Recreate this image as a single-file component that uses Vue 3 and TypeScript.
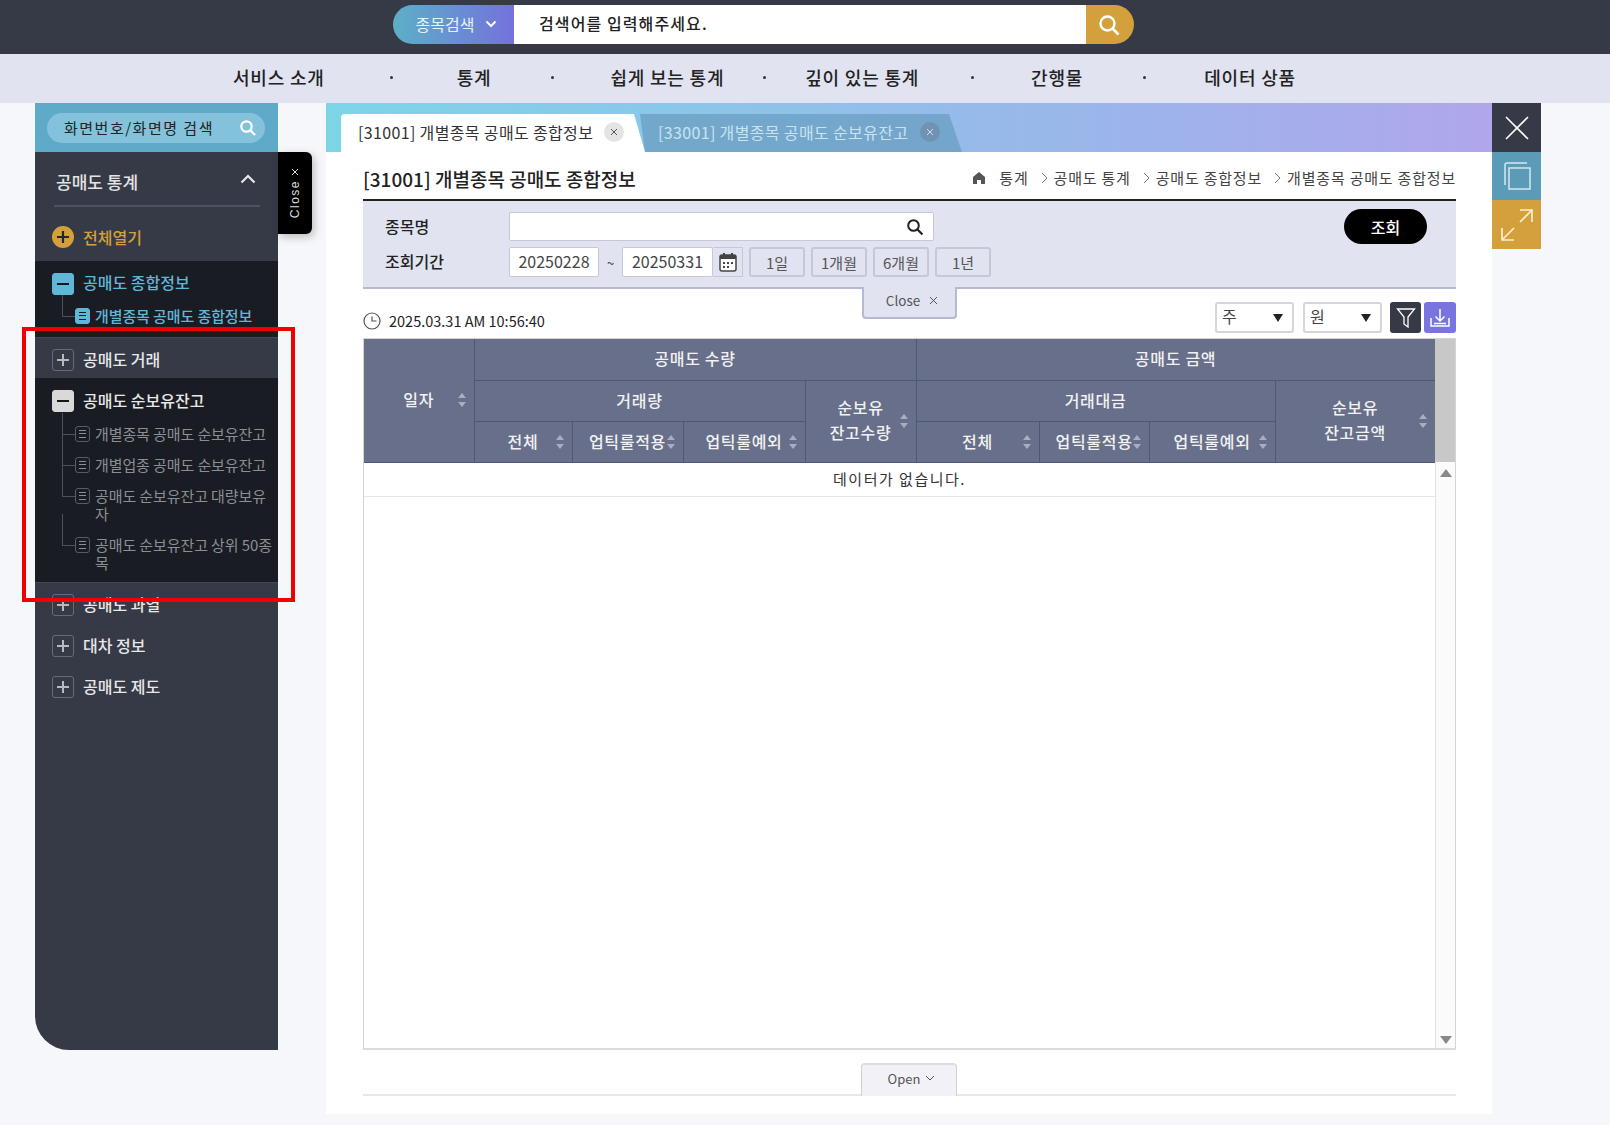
<script setup lang="ts">
const navItems = ['서비스 소개', '통계', '쉽게 보는 통계', '깊이 있는 통계', '간행물', '데이터 상품']

interface TreeGroup {
  title: string
  open?: 'blue' | 'white'
  subs?: string[]
}

const groups: TreeGroup[] = [
  { title: '공매도 종합정보', open: 'blue', subs: ['개별종목 공매도 종합정보'] },
  { title: '공매도 거래' },
  {
    title: '공매도 순보유잔고',
    open: 'white',
    subs: [
      '개별종목 공매도 순보유잔고',
      '개별업종 공매도 순보유잔고',
      '공매도 순보유잔고 대량보유자',
      '공매도 순보유잔고 상위 50종목',
    ],
  },
  { title: '공매도 과열' },
  { title: '대차 정보' },
  { title: '공매도 제도' },
]

const crumbs = ['통계', '공매도 통계', '공매도 종합정보', '개별종목 공매도 종합정보']
const periods = ['1일', '1개월', '6개월', '1년']
const colWidths = [110, 98, 111, 122, 111, 123, 110, 126, 160]
</script>

<template>
  <div class="page">
    <header class="top">
      <div class="search-box">
        <div class="search-kind">
          종목검색
          <svg width="12" height="8" viewBox="0 0 12 8"><path d="M1.5 1.5 6 6l4.5-4.5" fill="none" stroke="#fff" stroke-width="2" /></svg>
        </div>
        <div class="search-input">검색어를 입력해주세요.</div>
        <div class="search-btn">
          <svg width="24" height="24" viewBox="0 0 24 24"><circle cx="10.5" cy="10.5" r="7" fill="none" stroke="#fff" stroke-width="2.4" /><path d="m15.5 15.5 6 6" stroke="#fff" stroke-width="2.6" /></svg>
        </div>
      </div>
    </header>

    <nav class="nav">
      <template v-for="(item, i) in navItems" :key="item">
        <span class="nav-item">{{ item }}</span>
        <span v-if="i < navItems.length - 1" class="nav-dot"></span>
      </template>
    </nav>

    <div class="body">
      <aside class="side">
        <div class="side-search">
          <div class="side-pill">
            <span>화면번호/화면명 검색</span>
            <svg width="18" height="18" viewBox="0 0 18 18"><circle cx="7.5" cy="7.5" r="5.2" fill="none" stroke="#fff" stroke-width="2.2" /><path d="m11.5 11.5 4.5 4.5" stroke="#fff" stroke-width="2.4" /></svg>
          </div>
        </div>
        <div class="side-head">
          <div class="side-head-in">
            <span>공매도 통계</span>
            <svg width="16" height="10" viewBox="0 0 16 10"><path d="M1.5 8.5 8 2l6.500 6.500" fill="none" stroke="#e8e8e8" stroke-width="2.2" /></svg>
          </div>
        </div>
        <div class="open-all">
          <svg width="22" height="22" viewBox="0 0 22 22"><circle cx="11" cy="11" r="11" fill="#d3a03c" /><path d="M11 5v12M5 11h12" stroke="#23262e" stroke-width="2.2" /></svg>
          <span>전체열기</span>
        </div>

        <div
          v-for="g in groups"
          :key="g.title"
          class="group"
          :class="{ open: g.open, blue: g.open === 'blue' }"
        >
          <div class="group-row">
            <span class="box" :class="g.open">
              <i></i><b v-if="!g.open"></b>
            </span>
            <span class="group-title">{{ g.title }}</span>
          </div>
          <ul v-if="g.subs" class="subs">
            <li v-for="s in g.subs" :key="s" class="sub">
              <span class="sub-icon"><i></i></span>
              <span class="sub-text">{{ s }}</span>
            </li>
          </ul>
        </div>

        <div class="side-close">
          <span>Close</span>
          <svg width="8" height="8" viewBox="0 0 8 8"><path d="m1 1 6 6M7 1 1 7" stroke="#ddd" stroke-width="1" /></svg>
        </div>
        <div class="red-mark"></div>
      </aside>

      <main class="main">
        <div class="tabs">
          <div class="tab active">
            <span>[31001] 개별종목 공매도 종합정보</span>
            <span class="tab-x">
              <svg width="8" height="8" viewBox="0 0 8 8"><path d="m1 1 6 6M7 1 1 7" stroke="#555" stroke-width="1" /></svg>
            </span>
          </div>
          <div class="tab second">
            <span>[33001] 개별종목 공매도 순보유잔고</span>
            <span class="tab-x">
              <svg width="8" height="8" viewBox="0 0 8 8"><path d="m1 1 6 6M7 1 1 7" stroke="#dde" stroke-width="1" /></svg>
            </span>
          </div>
        </div>

        <div class="content">
          <div class="title-row">
            <h1>[31001] 개별종목 공매도 종합정보</h1>
            <div class="crumbs">
              <svg width="14" height="14" viewBox="0 0 14 14"><path d="M7 1 1 6v7h4V9h4v4h4V6z" fill="#555" /></svg>
              <template v-for="(c, i) in crumbs" :key="c">
                <svg v-if="i > 0" class="crumb-arrow" width="7" height="12" viewBox="0 0 7 12"><path d="m1 1 5 5-5 5" fill="none" stroke="#777" /></svg>
                <span>{{ c }}</span>
              </template>
            </div>
          </div>

          <div class="filter">
            <div class="filter-left">
              <div class="filter-row first">
                <label>종목명</label>
                <div class="stock-input">
                  <svg width="18" height="18" viewBox="0 0 18 18"><circle cx="7.500" cy="7.500" r="5.300" fill="none" stroke="#222" stroke-width="2" /><path d="m11.500 11.500 5 5" stroke="#222" stroke-width="2.200" /></svg>
                </div>
              </div>
              <div class="filter-row">
                <label>조회기간</label>
                <div class="date">20250228</div>
                <span class="tilde">~</span>
                <div class="date joined">20250331</div>
                <div class="cal">
                  <svg width="18" height="20" viewBox="0 0 18 20">
                    <rect x="1" y="3" width="16" height="16" rx="2" fill="#fff" stroke="#444" stroke-width="1.500" />
                    <path d="M1 3h16v4H1z" fill="#444" />
                    <path d="M5 1v4M13 1v4" stroke="#444" stroke-width="2" />
                    <path d="M4 10h2v2H4zM8 10h2v2H8zM12 10h2v2h-2zM4 14h2v2H4zM8 14h2v2H8z" fill="#444" />
                  </svg>
                </div>
                <button v-for="p in periods" :key="p" class="period">{{ p }}</button>
              </div>
            </div>
            <button class="query">조회</button>
          </div>

          <div class="tools">
            <div class="time">
              <svg width="18" height="18" viewBox="0 0 18 18"><circle cx="9" cy="9" r="8" fill="none" stroke="#555" stroke-width="1.200" /><path d="M9 4.500V9h4.500" fill="none" stroke="#555" stroke-width="1.200" /></svg>
              <span>2025.03.31 AM 10:56:40</span>
            </div>
            <div class="tool-right">
              <div class="select">주<i></i></div>
              <div class="select">원<i></i></div>
              <div class="tool-btn dark">
                <svg width="20" height="22" viewBox="0 0 20 22"><path d="M1.500 2h17l-6.500 8v10l-4-3v-7z" fill="none" stroke="#fff" stroke-width="1.300" /></svg>
              </div>
              <div class="tool-btn violet">
                <svg width="22" height="22" viewBox="0 0 22 22"><path d="M11 2v12M6.500 9.500 11 14l4.500-4.500" fill="none" stroke="#fff" stroke-width="1.500" /><path d="M2 11v8h18v-8" fill="none" stroke="#fff" stroke-width="1.500" /><path d="M5 16.500h12" stroke="#fff" stroke-width="1.500" /></svg>
              </div>
            </div>
            <div class="fold-close"><span>Close</span><svg width="9" height="9" viewBox="0 0 9 9"><path d="m1 1 7 7M8 1 1 8" stroke="#555" stroke-width="1" /></svg></div>
          </div>

          <div class="grid">
            <div class="grid-main">
              <table>
                <colgroup>
                  <col v-for="(w, i) in colWidths" :key="i" :width="w" />
                </colgroup>
                <thead>
                  <tr>
                    <th rowspan="3">일자<span class="sort"></span></th>
                    <th colspan="4">공매도 수량</th>
                    <th colspan="4">공매도 금액</th>
                  </tr>
                  <tr>
                    <th colspan="3">거래량</th>
                    <th rowspan="2" class="two">순보유<br />잔고수량<span class="sort"></span></th>
                    <th colspan="3">거래대금</th>
                    <th rowspan="2" class="two">순보유<br />잔고금액<span class="sort"></span></th>
                  </tr>
                  <tr>
                    <th>전체<span class="sort"></span></th>
                    <th>업틱룰적용<span class="sort"></span></th>
                    <th>업틱룰예외<span class="sort"></span></th>
                    <th>전체<span class="sort"></span></th>
                    <th>업틱룰적용<span class="sort"></span></th>
                    <th>업틱룰예외<span class="sort"></span></th>
                  </tr>
                </thead>
              </table>
              <div class="empty">데이터가 없습니다.</div>
            </div>
            <div class="scroll">
              <div class="scroll-thumb"></div>
              <div class="scroll-up"></div>
              <div class="scroll-down"></div>
            </div>
          </div>

          <div class="fold-line">
            <div class="fold-open">
              <span>Open</span>
              <svg width="10" height="6" viewBox="0 0 10 6"><path d="m1 1 4 4 4-4" fill="none" stroke="#555" /></svg>
            </div>
          </div>
        </div>
      </main>

      <div class="rail">
        <div class="rail-btn r1">
          <svg width="26" height="26" viewBox="0 0 26 26"><path d="m2 2 22 22M24 2 2 24" stroke="#fff" stroke-width="1.600" /></svg>
        </div>
        <div class="rail-btn r2">
          <svg width="30" height="30" viewBox="0 0 30 30" fill="none" stroke="#d5e8f0" stroke-width="1.500"><rect x="7" y="7" width="21" height="21" /><path d="M3 24V4a2 2 0 0 1 2-2h20" /></svg>
        </div>
        <div class="rail-btn r3">
          <svg width="34" height="34" viewBox="0 0 34 34" fill="none" stroke="#fbeed0" stroke-width="1.700"><path d="M20 2h12v12M32 2 20 14M2 20v12h12M2 32l12-12" /></svg>
        </div>
      </div>
    </div>
  </div>
</template>

<style>
html, body { margin: 0; background: #f6f7fb; }
</style>

<style scoped>
.page {
  width: 1610px;
  height: 1125px;
  overflow: hidden;
  background: #f6f7fb;
  font-family: "Noto Sans CJK KR", "Noto Sans", sans-serif;
  color: #333;
}
.top {
  height: 54px;
  background: #363a47;
  padding-top: 5px;
  box-sizing: border-box;
  padding-left: 393px;
}
.search-box { display: flex; height: 39px; width: 741px; }
.search-kind {
  width: 121px;
  display: flex;
  align-items: center;
  justify-content: center;
  gap: 11px;
  color: #e6f2f7;
  font-size: 16px;
  padding: 0 0 2px 6px;
  box-sizing: border-box;
  border-radius: 20px 0 0 20px;
  background: linear-gradient(90deg, #5cafc7, #7472dc);
}
.search-input {
  flex: 1;
  background: #fff;
  color: #222;
  font-size: 16px;
  font-weight: 500;
  line-height: 37px;
  padding-left: 25px;
  letter-spacing: 1.100px;
}
.search-btn {
  width: 48px;
  background: #d3a03c;
  border-radius: 0 20px 20px 0;
  display: flex;
  align-items: center;
  padding-left: 11px;
  box-sizing: border-box;
}

.nav {
  height: 49px;
  background: #e1e3f1;
  display: flex;
  align-items: center;
  padding-left: 233px;
  padding-bottom: 4px;
  box-sizing: border-box;
  font-size: 18px;
  font-weight: 500;
  color: #222;
  letter-spacing: .8px;
}
.nav-dot { width: 3px; height: 3px; border-radius: 50%; background: #333; margin-top: 2px; }
.nav-item:nth-child(3) { margin-left: 64px; }
.nav-item:nth-child(5) { margin-left: 56px; }
.nav-item:nth-child(7) { margin-left: 39px; }
.nav-item:nth-child(9) { margin-left: 57px; }
.nav-item:nth-child(11) { margin-left: 58px; }
.nav-dot:nth-child(2) { margin-left: 65px; }
.nav-dot:nth-child(4) { margin-left: 60px; }
.nav-dot:nth-child(6) { margin-left: 39px; }
.nav-dot:nth-child(8) { margin-left: 52px; }
.nav-dot:nth-child(10) { margin-left: 60px; }

.body { display: flex; padding-left: 35px; align-items: flex-start; }

.side {
  position: relative;
  width: 243px;
  height: 947px;
  background: #363a47;
  border-radius: 0 0 0 34px;
  color: #eee;
  flex-shrink: 0;
}
.side-search {
  height: 49px;
  background: #5fa9c9;
  padding: 10px 13px 0 12px;
  box-sizing: border-box;
}
.side-pill {
  height: 30px;
  background: #84c2dc;
  border-radius: 15px;
  display: flex;
  align-items: center;
  justify-content: space-between;
  padding: 0 8px 0 17px;
  font-size: 15px;
  color: #222;
  letter-spacing: 1.500px;
}
.side-pill span { margin-top: -2px; }
.side-head { padding: 0 18px 0 19px; }
.side-head-in {
  height: 55px;
  border-bottom: 2px solid #4d5162;
  box-sizing: border-box;
  display: flex;
  align-items: center;
  justify-content: space-between;
  padding: 6px 4px 0 2px;
  font-size: 17px;
  font-weight: 500;
  color: #e4e4e4;
}
.side-head-in svg { margin-top: -6px; }
.open-all {
  height: 54px;
  box-sizing: border-box;
  display: flex;
  align-items: center;
  gap: 9px;
  padding: 6px 0 0 17px;
  color: #d3a03c;
  font-size: 16px;
  font-weight: 500;
}
.group { padding-left: 17px; }
.group .group-row { height: 41px; }
.group.open { background: #191c22; padding-bottom: 3px; }
.group.blue .group-row { height: 40px; }
.group.blue { padding-bottom: 5px; }
.group.open + .group:not(.open) { box-shadow: inset 0 1px #41465a; }
.group-row {
  display: flex;
  align-items: flex-start;
  gap: 9px;
  padding-top: 12px;
  box-sizing: border-box;
  font-size: 16px;
  font-weight: 500;
  color: #e8e8e8;
}
.group-title { line-height: 20px; }
.blue .group-title { color: #5fb8d8; line-height: 18px; }
.box {
  position: relative;
  width: 22px;
  height: 22px;
  box-sizing: border-box;
  border: 1px solid #666b7c;
  border-radius: 3px;
  flex-shrink: 0;
}
.box i, .box b {
  position: absolute;
  background: #b8bac2;
  left: 4px;
  right: 4px;
  top: 9px;
  height: 2px;
}
.box b { left: 9px; right: 9px; top: 4px; bottom: 4px; width: 2px; height: auto; }
.box.blue { background: #5fb8d8; border-color: #5fb8d8; }
.box.blue i, .box.white i { background: #14161b; }
.box.white { background: #d9d9d9; border-color: #d9d9d9; }
.subs { list-style: none; margin: 0; padding: 0; position: relative; }
.sub {
  position: relative;
  display: flex;
  align-items: flex-start;
  padding: 6px 0 7px 23px;
  font-size: 15px;
  line-height: 18px;
  letter-spacing: -.1px;
  color: #8c8e96;
}
.sub::before {
  content: "";
  position: absolute;
  left: 10px;
  top: -6px;
  width: 12px;
  height: 21px;
  border-left: 1px solid #4d5060;
  border-bottom: 1px solid #4d5060;
}
.sub + .sub::before { top: -16px; height: 31px; }
.sub-icon {
  width: 15px;
  height: 16px;
  box-sizing: border-box;
  border: 1px solid #565a6a;
  border-radius: 3px;
  flex-shrink: 0;
  margin-top: 1px;
  padding: 3px 3px;
  background: #191c22;
  position: relative;
  z-index: 1;
}
.sub-icon i {
  display: block;
  height: 6px;
  border-top: 1px solid #8c8e96;
  border-bottom: 1px solid #8c8e96;
  position: relative;
}
.sub-icon i::after {
  content: "";
  position: absolute;
  left: 0;
  right: 0;
  top: 2px;
  height: 1px;
  background: #8c8e96;
}
.sub-text { width: 182px; margin-left: 5px; word-break: break-all; }
.blue .sub { color: #5fb8d8; font-weight: 500; }
.blue .sub::before { height: 21px; }
.blue .sub-icon { background: #5fb8d8; border-color: #5fb8d8; }
.blue .sub-icon i { border-color: #14161b; }
.blue .sub-icon i::after { background: #14161b; }

.side-close {
  position: absolute;
  left: 243px;
  top: 49px;
  width: 34px;
  height: 82px;
  background: #000;
  border-radius: 0 6px 6px 0;
  box-shadow: 2px 3px 8px rgba(0, 0, 0, .25);
  display: flex;
  align-items: center;
  justify-content: center;
  flex-direction: column-reverse;
  gap: 4px;
  color: #ddd;
}
.side-close span {
  writing-mode: vertical-rl;
  transform: rotate(180deg);
  font-family: "Liberation Sans", sans-serif;
  font-size: 12px;
  letter-spacing: 1.500px;
}
.red-mark {
  position: absolute;
  left: -13px;
  top: 224px;
  width: 273px;
  height: 275px;
  box-sizing: border-box;
  border: 4px solid #f00000;
  pointer-events: none;
}

.main {
  width: 1166px;
  height: 1011px;
  margin-left: 48px;
  background: #fff;
  flex-shrink: 0;
}
.tabs {
  height: 49px;
  background: linear-gradient(90deg, #7dd5e8 0%, #9ab6ea 65%, #b0a6ec 100%);
  position: relative;
  box-sizing: border-box;
}
.tab {
  position: absolute;
  top: 11px;
  height: 38px;
  display: flex;
  align-items: center;
  font-size: 16px;
  letter-spacing: .35px;
  padding-bottom: 2px;
  box-sizing: border-box;
}
.tab.active {
  left: 15px;
  width: 304px;
  padding-left: 17px;
  background: #fff;
  color: #333;
  border-radius: 4px 0 0 0;
  clip-path: polygon(0 0, 293px 0, 100% 100%, 0 100%);
  z-index: 1;
}
.tab.second {
  left: 314px;
  width: 322px;
  padding-left: 18px;
  background: #6fa3c6;
  color: #d6e8f2;
  opacity: .85;
  clip-path: polygon(0 0, 309px 0, 100% 100%, 5px 100%);
}
.tab-x {
  width: 20px;
  height: 20px;
  border-radius: 50%;
  background: #e4e4e4;
  margin-left: 11px;
  display: flex;
  align-items: center;
  justify-content: center;
}
.second .tab-x { background: #6b8caa; margin-left: 12px; }

.content { padding: 0 36px 0 37px; }
.title-row {
  height: 47px;
  display: flex;
  align-items: flex-end;
  justify-content: space-between;
  padding-bottom: 6px;
  box-sizing: border-box;
}
h1 {
  margin: 0;
  font-size: 19px;
  font-weight: 500;
  line-height: 28px;
  color: #222;
}
.crumbs {
  display: flex;
  align-items: center;
  font-size: 15px;
  letter-spacing: .8px;
  color: #444;
  line-height: 28px;
  padding-bottom: 1px;
}
.crumbs > span:first-of-type { margin-left: 13px; }
.crumb-arrow { margin: 0 6px 0 12px; }

.filter {
  height: 90px;
  background: #e1e3f1;
  border-top: 2px solid #222;
  border-bottom: 2px solid #b5b9d2;
  box-sizing: border-box;
  display: flex;
  justify-content: space-between;
  padding: 11px 29px 0 22px;
}
.filter-row { display: flex; align-items: center; height: 30px; }
.filter-row.first { height: 29px; margin-bottom: 6px; }
label {
  width: 124px;
  font-size: 16px;
  font-weight: 500;
  color: #222;
  margin-top: -2px;
}
.stock-input {
  width: 425px;
  height: 29px;
  box-sizing: border-box;
  background: #fff;
  border: 1px solid #c5c8d8;
  border-radius: 2px;
  display: flex;
  align-items: center;
  justify-content: flex-end;
  padding-right: 9px;
}
.date {
  width: 90px;
  height: 30px;
  box-sizing: border-box;
  background: #fff;
  border: 1px solid #c5c8d8;
  border-radius: 2px;
  font-size: 16px;
  line-height: 27px;
  text-align: center;
  color: #444;
}
.date.joined { width: 91px; }
.tilde { width: 23px; text-align: center; font-size: 13px; color: #444; }
.cal {
  width: 30px;
  height: 30px;
  box-sizing: border-box;
  border: 1px solid #c5c8d8;
  border-left: 0;
  margin-right: 6px;
  display: flex;
  align-items: center;
  justify-content: center;
}
.period {
  width: 56px;
  height: 30px;
  box-sizing: border-box;
  margin: 0 6px 0 0;
  padding: 0;
  border: 2px solid #c5c8d8;
  border-radius: 3px;
  background: #e1e3f1;
  color: #555;
  font-family: inherit;
  font-size: 15px;
}
.query {
  width: 83px;
  height: 35px;
  margin-top: -3px;
  border: 0;
  border-radius: 18px;
  background: #000;
  color: #fff;
  font-family: inherit;
  font-size: 16px;
  font-weight: 500;
}

.tools {
  position: relative;
  height: 49px;
  display: flex;
  align-items: flex-end;
  justify-content: space-between;
  padding-bottom: 5px;
  box-sizing: border-box;
}
.time {
  display: flex;
  align-items: center;
  gap: 8px;
  font-size: 14.500px;
  color: #222;
  margin-bottom: 2px;
}
.tool-right { display: flex; align-items: center; }
.select {
  position: relative;
  width: 79px;
  height: 31px;
  box-sizing: border-box;
  border: 2px solid #d5d6dc;
  border-radius: 3px;
  margin-right: 9px;
  padding-left: 5px;
  font-size: 16px;
  line-height: 25px;
  color: #444;
}
.select + .select { margin-right: 8px; }
.select i {
  position: absolute;
  right: 9px;
  top: 10px;
  border-top: 8px solid #222;
  border-left: 5.500px solid transparent;
  border-right: 5.500px solid transparent;
}
.tool-btn {
  width: 31px;
  height: 31px;
  border-radius: 3px;
  display: flex;
  align-items: center;
  justify-content: center;
}
.tool-btn.dark { background: #363a47; margin-right: 3px; }
.tool-btn.violet { background: #7a74e0; width: 32px; }
.fold-close {
  position: absolute;
  left: 499px;
  top: -2px;
  width: 95px;
  height: 32px;
  box-sizing: border-box;
  background: #e1e3f1;
  border: 2px solid #b5b9d2;
  border-top: 0;
  border-radius: 0 0 4px 4px;
  display: flex;
  align-items: center;
  justify-content: center;
  gap: 9px;
  padding: 0 0 4px 5px;
  font-size: 13.500px;
  color: #555;
}

.grid {
  height: 712px;
  display: flex;
  box-sizing: border-box;
  border: 1px solid #d4d4d4;
  border-bottom: 2px solid #dcdcdc;
}
.grid-main { width: 1071px; }
table {
  border-collapse: collapse;
  table-layout: fixed;
  width: 1071px;
}
th {
  position: relative;
  height: 41px;
  padding: 0 0 2px;
  box-sizing: border-box;
  background: #676f8a;
  border: 1px solid #4f5872;
  border-top: 0;
  color: #f2f2f2;
  font-size: 16px;
  font-weight: 500;
  letter-spacing: .7px;
}
th:first-child { border-left: 0; }
th.two { line-height: 25px; }
.sort {
  position: absolute;
  right: 7px;
  top: 50%;
  height: 14px;
  width: 9px;
  margin-top: -7px;
}
.sort::before, .sort::after {
  content: "";
  position: absolute;
  left: 0;
  border-left: 4.500px solid transparent;
  border-right: 4.500px solid transparent;
}
.sort::before { top: 0; border-bottom: 5px solid #a8aec2; }
.sort::after { bottom: 0; border-top: 5px solid #a8aec2; }
.empty {
  height: 34px;
  border-bottom: 1px solid #e6e6e6;
  box-sizing: border-box;
  text-align: center;
  font-size: 15px;
  line-height: 32px;
  color: #333;
  letter-spacing: 1.500px;
}
.scroll {
  position: relative;
  flex: 1;
  border-left: 1px solid #e2e2e2;
  background: #fbfbfb;
}
.scroll-thumb { height: 123px; background: #c8c8c8; margin-left: -1px; }
.scroll-up, .scroll-down {
  position: absolute;
  left: 4px;
  border-left: 6px solid transparent;
  border-right: 6px solid transparent;
}
.scroll-up { top: 130px; border-bottom: 8px solid #888; }
.scroll-down { bottom: 4px; border-top: 8px solid #888; }

.fold-line {
  position: relative;
  height: 2px;
  margin-top: 44px;
  background: #e8e8e8;
}
.fold-open {
  position: absolute;
  left: 498px;
  bottom: 0;
  width: 96px;
  height: 33px;
  box-sizing: border-box;
  background: #f2f1f7;
  border: 1px solid #cfd0d8;
  border-top: 2px solid #dcdce2;
  border-bottom: 0;
  border-radius: 4px 4px 0 0;
  display: flex;
  align-items: center;
  justify-content: center;
  gap: 5px;
  padding: 0 0 5px 5px;
  font-size: 13px;
  color: #555;
}

.rail { width: 49px; flex-shrink: 0; }
.rail-btn {
  height: 49px;
  display: flex;
  align-items: center;
  justify-content: center;
}
.r1 { background: #363a47; }
.r2 { background: #5b9bb8; height: 48px; }
.r3 { background: #d3a03c; }
</style>
